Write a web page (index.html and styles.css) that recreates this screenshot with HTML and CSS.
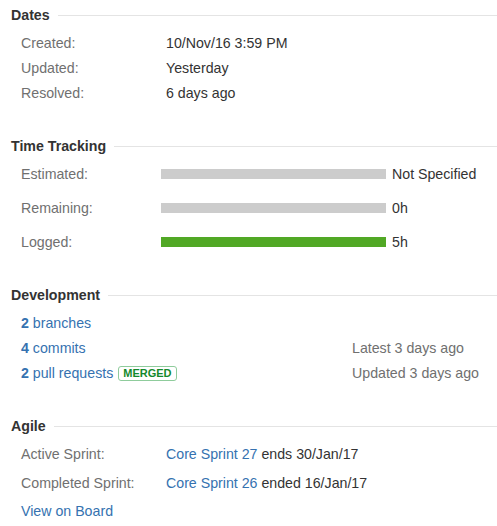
FILE: index.html
```html
<!DOCTYPE html>
<html>
<head>
<meta charset="utf-8">
<link rel="stylesheet" href="styles.css">
</head>
<body>
<section class="mod mod-dates">
  <h2 class="mod-head"><span>Dates</span></h2>
  <div class="rows">
    <div class="row"><span class="lbl">Created:</span><span class="val">10/Nov/16 3:59 PM</span></div>
    <div class="row"><span class="lbl">Updated:</span><span class="val">Yesterday</span></div>
    <div class="row"><span class="lbl">Resolved:</span><span class="val">6 days ago</span></div>
  </div>
</section>
<section class="mod mod-time">
  <h2 class="mod-head"><span>Time Tracking</span></h2>
  <div class="trows">
    <div class="trow"><span class="tlbl">Estimated:</span><span class="bar"></span><span class="val">Not Specified</span></div>
    <div class="trow"><span class="tlbl">Remaining:</span><span class="bar"></span><span class="val">0h</span></div>
    <div class="trow"><span class="tlbl">Logged:</span><span class="bar bar-logged"></span><span class="val">5h</span></div>
  </div>
</section>
<section class="mod mod-dev">
  <h2 class="mod-head"><span>Development</span></h2>
  <div class="rows">
    <div class="drow"><span class="dleft"><a class="lnk" href="#"><b>2</b> branches</a></span></div>
    <div class="drow"><span class="dleft"><a class="lnk" href="#"><b>4</b> commits</a></span><span class="dright">Latest 3 days ago</span></div>
    <div class="drow"><span class="dleft"><a class="lnk" href="#"><b>2</b> pull requests</a><span class="badge">MERGED</span></span><span class="dright">Updated 3 days ago</span></div>
  </div>
</section>
<section class="mod mod-agile">
  <h2 class="mod-head"><span>Agile</span></h2>
  <div class="arows">
    <div class="arow"><span class="lbl">Active Sprint:</span><span class="val"><a class="lnk" href="#">Core Sprint 27</a> ends 30/Jan/17</span></div>
    <div class="arow"><span class="lbl">Completed Sprint:</span><span class="val"><a class="lnk" href="#">Core Sprint 26</a> ended 16/Jan/17</span></div>
    <div class="arow arow-last"><a class="lnk" href="#">View on Board</a></div>
  </div>
</section>
</body>
</html>
```

FILE: styles.css
```css
html, body {
  margin: 0;
  padding: 0;
  background: #fff;
}
body {
  font-family: "Liberation Sans", Arial, sans-serif;
  font-size: 14.2px;
  color: #333;
  padding-top: 5px;
}
.mod {
  padding-left: 11px;
}
.mod-head {
  margin: 0;
  display: flex;
  align-items: center;
  height: 20px;
  line-height: 20px;
  font-size: 14.2px;
  font-weight: bold;
  color: #333;
}
.mod-head::after {
  content: "";
  flex: 1;
  height: 0;
  border-top: 1px solid #e4e4e4;
  margin-left: 8px;
}
.rows {
  margin-top: 6px;
  padding-left: 10px;
}
.row, .drow {
  display: flex;
  height: 25px;
  line-height: 25px;
}
.lbl {
  width: 145px;
  flex: none;
  color: #707070;
}
.val {
  color: #333;
}
.mod-time {
  margin-top: 30px;
}
.trows {
  padding-top: 1px;
  padding-left: 10px;
}
.trow {
  display: flex;
  align-items: center;
  height: 34px;
}
.tlbl {
  width: 140px;
  flex: none;
  color: #707070;
}
.bar {
  width: 225px;
  height: 10px;
  background: #ccc;
  margin-right: 6px;
  flex: none;
}
.bar-logged {
  background: #51a825;
}
.mod-dev {
  margin-top: 26px;
}
.dleft {
  width: 331px;
  flex: none;
  display: flex;
  align-items: center;
}
.dright {
  color: #707070;
}
.lnk {
  color: #3572b0;
  text-decoration: none;
}
.lnk b {
  font-weight: bold;
}
.badge {
  margin-left: 5px;
  display: inline-block;
  height: 13px;
  line-height: 13px;
  padding: 0 4px;
  border: 1px solid #8fcc9c;
  border-radius: 3px;
  color: #14892c;
  font-size: 11px;
  font-weight: bold;
}
.mod-agile {
  margin-top: 30px;
}
.arows {
  margin-top: 4px;
  padding-left: 10px;
}
.arow {
  display: flex;
  height: 29px;
  line-height: 29px;
}
.arow-last {
  height: 28px;
  line-height: 27px;
}
```
